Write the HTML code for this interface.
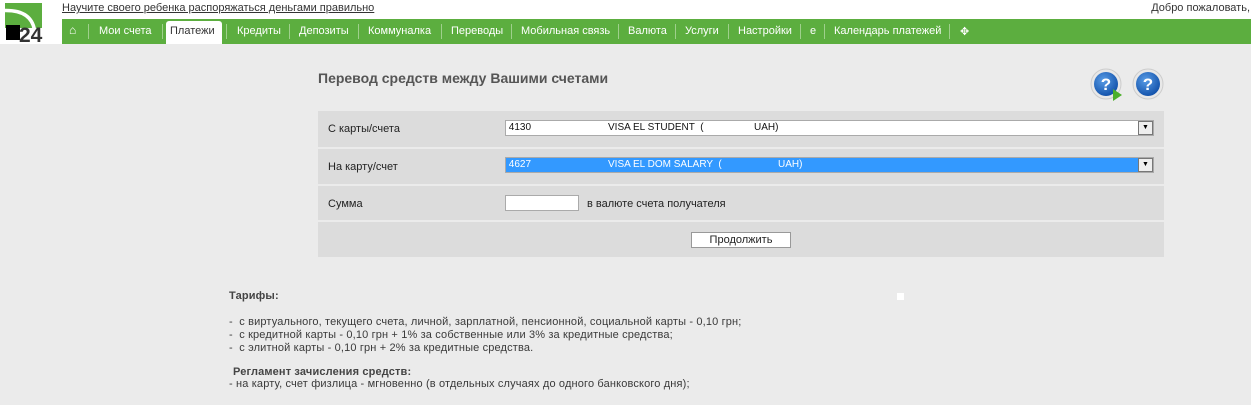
<!DOCTYPE html>
<html><head><meta charset="utf-8"><style>
body{margin:0;width:1251px;height:405px;background:#ebebeb;font-family:"Liberation Sans",sans-serif;position:relative;overflow:hidden}
.top{position:absolute;left:0;top:0;width:1251px;height:44px;background:#fff}
.abs{position:absolute}
.nav{position:absolute;left:62px;top:19px;width:1189px;height:25px;background:#5cae3f;font-size:11px;color:#fff;white-space:nowrap}
.nav span{position:absolute;top:6px}
.sep{position:absolute;top:5px;width:1px;height:15px;background:#9fd08c}
.act{position:absolute;left:104px;top:2px;width:56px;height:23px;background:#fff;border-radius:3px 3px 0 0;color:#333}
.row{position:absolute;left:318px;width:846px;background:#dcdcdc}
.lbl{position:absolute;left:10px;font-size:11px;color:#222}
.sel{position:absolute;left:187px;width:647px;height:14px;border:1px solid #aaa;background:#fff;font-size:10px;line-height:14px;color:#111}
.arr{position:absolute;right:0;top:0;width:13px;height:12px;border:1px solid #777;background:#eee;font-size:7px;text-align:center;line-height:12px;color:#000}
.t{font-size:11px;letter-spacing:0.15px;color:#3a3a3a;position:absolute;white-space:nowrap}
</style></head><body>
<div class="top"></div>
<svg class="abs" style="left:0;top:0" width="60" height="44">
<rect x="5" y="3" width="37" height="25" fill="#5cae3f"/>
<path d="M5 10.5Q31 10 34.5 30" stroke="#fff" stroke-width="3.5" fill="none"/>
<rect x="6" y="25" width="14" height="15" fill="#000"/>
<text x="19" y="42" font-family="Liberation Sans" font-weight="bold" font-size="21" fill="#333">24</text>
</svg>
<div class="abs" style="left:62px;top:2px;font-size:11px;color:#333;text-decoration:underline">Научите своего ребенка распоряжаться деньгами правильно</div>
<div class="abs" style="right:1px;top:2px;font-size:11px;color:#333">Добро пожаловать,</div>
<div class="nav">
<span style="left:7px;font-size:12px;top:4px">⌂</span><div class="sep" style="left:26px"></div>
<span style="left:37px">Мои счета</span><div class="sep" style="left:100px"></div>
<div class="act"></div><span style="left:108px;color:#333">Платежи</span><div class="sep" style="left:164px"></div>
<span style="left:175px">Кредиты</span><div class="sep" style="left:227px"></div>
<span style="left:237px">Депозиты</span><div class="sep" style="left:296px"></div>
<span style="left:306px">Коммуналка</span><div class="sep" style="left:379px"></div>
<span style="left:389px">Переводы</span><div class="sep" style="left:449px"></div>
<span style="left:459px">Мобильная связь</span><div class="sep" style="left:556px"></div>
<span style="left:566px">Валюта</span><div class="sep" style="left:613px"></div>
<span style="left:623px">Услуги</span><div class="sep" style="left:666px"></div>
<span style="left:676px">Настройки</span><div class="sep" style="left:738px"></div>
<span style="left:748px">е</span><div class="sep" style="left:762px"></div>
<span style="left:772px">Календарь платежей</span><div class="sep" style="left:887px"></div>
<span style="left:898px">✥</span>
</div>
<div class="abs" style="left:318px;top:70px;font-size:14px;font-weight:bold;color:#555">Перевод средств между Вашими счетами</div>
<svg class="abs" style="left:1090px;top:68px" width="80" height="34">
<defs><radialGradient id="g" cx=".4" cy=".35" r=".7"><stop offset="0" stop-color="#5a9de6"/><stop offset="1" stop-color="#0e4ea8"/></radialGradient></defs>
<circle cx="16" cy="16" r="15" fill="#e8e8e8" stroke="#ccc"/><circle cx="16" cy="16" r="12" fill="url(#g)"/>
<text x="16" y="22" text-anchor="middle" font-family="Liberation Sans" font-weight="bold" font-size="17" fill="#fff">?</text>
<path d="M23 21L32 27L23 33Z" fill="#4caf2a"/>
<circle cx="58" cy="16" r="15" fill="#e8e8e8" stroke="#ccc"/><circle cx="58" cy="16" r="12" fill="url(#g)"/>
<text x="58" y="22" text-anchor="middle" font-family="Liberation Sans" font-weight="bold" font-size="17" fill="#fff">?</text>
</svg>
<div class="row" style="top:111px;height:36px"><div class="lbl" style="top:12px">С карты/счета</div>
<div class="sel" style="top:9px">&nbsp;4130 <span style="position:absolute;left:102px;white-space:nowrap">VISA EL STUDENT &nbsp;( <span style="position:absolute;left:146px">UAH)</span></span><div class="arr">▼</div></div></div>
<div class="row" style="top:149px;height:35px"><div class="lbl" style="top:12px">На карту/счет</div>
<div class="sel" style="top:8px;background:#3399ff;color:#fff">&nbsp;4627 <span style="position:absolute;left:102px;white-space:nowrap">VISA EL DOM SALARY &nbsp;( <span style="position:absolute;left:170px">UAH)</span></span><div class="arr">▼</div></div></div>
<div class="row" style="top:186px;height:34px"><div class="lbl" style="top:12px">Сумма</div>
<div class="abs" style="left:187px;top:9px;width:72px;height:14px;border:1px solid #aaa;background:#fff"></div>
<div class="lbl" style="left:269px;top:12px">в валюте счета получателя</div></div>
<div class="row" style="top:222px;height:35px">
<div class="abs" style="left:373px;top:10px;width:98px;height:14px;border:1px solid #999;background:#fff;font-size:11px;text-align:center;line-height:14px;color:#222">Продолжить</div></div>
<div class="abs" style="left:897px;top:293px;width:7px;height:7px;background:#fff"></div>
<div class="t" style="left:229px;top:290px;font-weight:bold;color:#444">Тарифы:</div>
<div class="t" style="left:229px;top:316px">-&nbsp; с виртуального, текущего счета, личной, зарплатной, пенсионной, социальной карты - 0,10 грн;</div>
<div class="t" style="left:229px;top:329px">-&nbsp; с кредитной карты - 0,10 грн + 1% за собственные или 3% за кредитные средства;</div>
<div class="t" style="left:229px;top:342px">-&nbsp; с элитной карты - 0,10 грн + 2% за кредитные средства.</div>
<div class="t" style="left:233px;top:366px;font-weight:bold;color:#444">Регламент зачисления средств:</div>
<div class="t" style="left:229px;top:378px">- на карту, счет физлица - мгновенно (в отдельных случаях до одного банковского дня);</div>
</body></html>
